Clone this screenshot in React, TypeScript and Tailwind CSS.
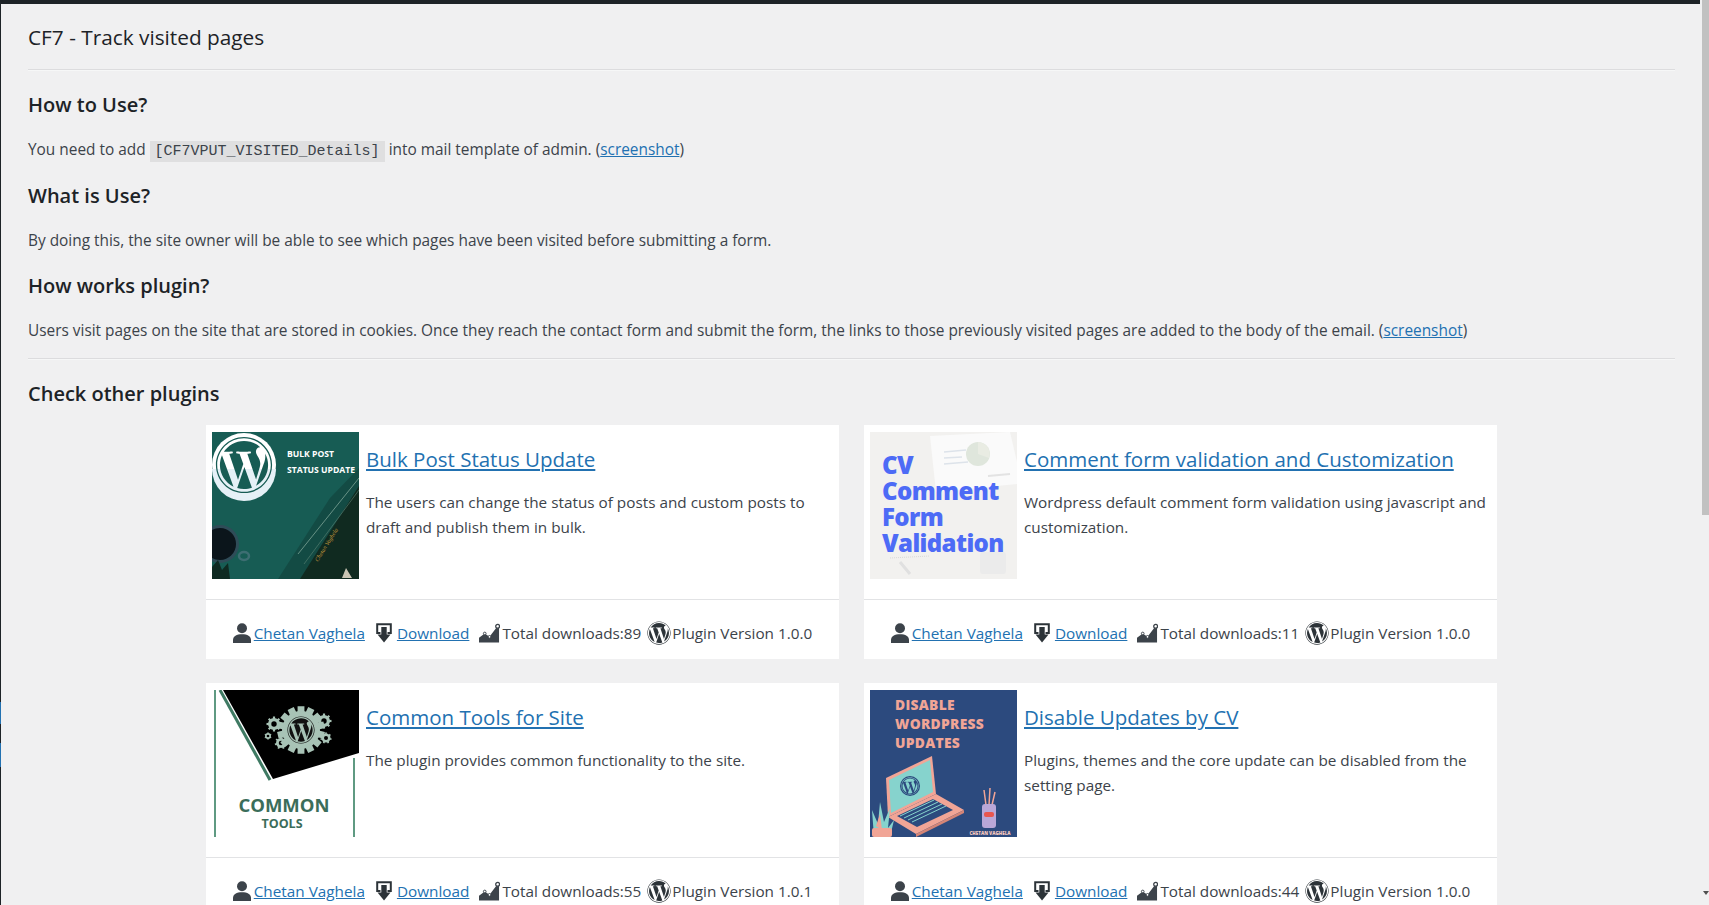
import React from "react";
import { FaWordpress } from "react-icons/fa";

type Plugin = {
  title: string;
  desc: string;
  downloads: number;
  version: string;
  Art: () => React.ReactElement;
};

function BulkArt() {
  return (
    <svg viewBox="0 0 147 147" className="w-full h-full">
      <rect width="147" height="147" fill="#175c54" />
      <path d="M66 147 L118 66 L147 36 L147 147 Z" fill="#134b44" />
      <path d="M88 147 L147 54 L147 147 Z" fill="#102a20" />
      <path d="M86 122 L147 46" stroke="#7ea597" strokeWidth="0.8" />
      <path d="M92 132 L147 58" stroke="#5e8576" strokeWidth="0.6" />
      <text x="106" y="130" fontSize="6" fill="#c99a3c" fontStyle="italic" transform="rotate(-58 106 130)" fontFamily="'Liberation Serif', serif">
        Chetan Vaghela
      </text>
      <path d="M134 136 L140 146 L130 146 Z" fill="#c9c4b3" />
      <circle cx="8" cy="112" r="19" fill="#2f4c58" />
      <circle cx="8" cy="112" r="16" fill="#0b151b" />
      <ellipse cx="32" cy="124" rx="5" ry="4" fill="none" stroke="#3d6e72" strokeWidth="2.5" />
      <path d="M0 135 L6 128 L10 138 L16 131 L18 147 L0 147 Z" fill="#0f2a22" />
      <circle cx="32" cy="33" r="32" fill="#ffffff" />
      <path d="M0 37 A32 32 0 0 0 64 37 Z" fill="#e6f1f7" />
      <FaWordpress x={3} y={4} size={58} color="#175c54" />
      <text x="75" y="25" fontSize="8.6" fontWeight="700" fill="#ffffff" fontFamily="'Open Sans', sans-serif">
        BULK POST
      </text>
      <text x="75" y="41" fontSize="8.6" fontWeight="700" fill="#ffffff" fontFamily="'Open Sans', sans-serif">
        STATUS UPDATE
      </text>
    </svg>
  );
}

function CvArt() {
  return (
    <div className="relative w-full h-full">
      <svg viewBox="0 0 147 147" className="absolute inset-0 w-full h-full">
        <rect width="147" height="147" fill="#f2f1ef" />
        <path d="M60 4 L140 0 L147 30 L147 52 L66 60 Z" fill="#fafafa" />
        <circle cx="108" cy="22" r="12" fill="#dfe6dc" />
        <path d="M108 22 L108 10 A12 12 0 0 1 119 26 Z" fill="#e9ece3" />
        <path d="M74 20 L96 18 M74 26 L92 25 M74 32 L98 30" stroke="#dde3ea" strokeWidth="1.5" />
        <path d="M118 44 L140 42" stroke="#e3e3e3" strokeWidth="2" />
        <path d="M20 126 L60 124" stroke="#d9d9d9" strokeWidth="1" strokeDasharray="1 1" />
        <path d="M30 130 L40 142" stroke="#e0e0e0" strokeWidth="3" />
        <rect x="110" y="120" width="26" height="22" rx="3" fill="#ebebeb" />
      </svg>
      <p className="relative pl-[12px] pt-[20px] text-[24px] leading-[26px] font-extrabold tracking-[-0.6px] text-[#4d6bf6]">
        CV
        <br />
        Comment
        <br />
        Form
        <br />
        Validation
      </p>
    </div>
  );
}

function Gear({ cx, cy, r, teeth }: { cx: number; cy: number; r: number; teeth: number }) {
  const items = [];
  for (let i = 0; i < teeth; i++) {
    items.push(
      <rect
        key={i}
        x={cx - r * 0.18}
        y={cy - r - r * 0.25}
        width={r * 0.36}
        height={r * 0.5}
        transform={`rotate(${(360 / teeth) * i} ${cx} ${cy})`}
      />
    );
  }
  return (
    <g fill="#a8c3b6">
      {items}
      <circle cx={cx} cy={cy} r={r} />
      <circle cx={cx} cy={cy} r={r * 0.45} fill="#000" />
    </g>
  );
}

function CommonArt() {
  return (
    <svg viewBox="0 0 147 147" className="w-full h-full">
      <rect width="147" height="147" fill="#ffffff" />
      <path d="M11 0 L147 0 L147 63 L61 89 Z" fill="#000000" />
      <path d="M8 0 L58 90" stroke="#3f7a63" strokeWidth="3" />
      <rect x="2" y="0" width="2" height="147" fill="#5f9a82" />
      <rect x="141" y="68" width="2" height="79" fill="#5f9a82" />
      <Gear cx={62} cy={34} r={6} teeth={8} />
      <Gear cx={69} cy={53} r={5} teeth={7} />
      <Gear cx={112} cy={31} r={6} teeth={8} />
      <Gear cx={114} cy={48} r={4.5} teeth={7} />
      <Gear cx={56} cy={46} r={3} teeth={6} />
      <Gear cx={89} cy={40} r={19} teeth={14} />
      <circle cx="89" cy="40" r="16" fill="#a8c3b6" />
      <FaWordpress x={75} y={26} size={28} color="#111" />
      <text x="72" y="122" textAnchor="middle" fontSize="18.5" fontWeight="700" fill="#3b6d5a" fontFamily="'Open Sans', sans-serif">
        COMMON
      </text>
      <text x="70" y="138" textAnchor="middle" fontSize="12.5" fontWeight="700" fill="#3b6d5a" fontFamily="'Open Sans', sans-serif">
        TOOLS
      </text>
    </svg>
  );
}

function DisableArt() {
  return (
    <svg viewBox="0 0 147 147" className="w-full h-full">
      <rect width="147" height="147" fill="#2c4a7e" />
      <g fill="#f1a596" fontFamily="'Open Sans', sans-serif" fontWeight="800" fontSize="13.8" letterSpacing="0.3">
        <text x="25" y="20">DISABLE</text>
        <text x="25" y="39">WORDPRESS</text>
        <text x="25" y="58">UPDATES</text>
      </g>
      <path d="M16 88 L62 66 L66 104 L18 127 Z" fill="#f1a596" />
      <path d="M19 90 L60 70 L63 102 L21 123 Z" fill="#86d3cd" />
      <circle cx="40" cy="96" r="10" fill="#2c4a7e" />
      <FaWordpress x={31} y={87} size={18} color="#86d3cd" />
      <path d="M18 127 L66 104 L94 120 L46 144 Z" fill="#f1a596" />
      <path d="M27 126 L63 109 L83 120 L47 137 Z" fill="#2c4a7e" />
      <path d="M30 126 L64 110 M34 128 L68 112 M38 130 L72 114 M42 132 L76 116" stroke="#86d3cd" strokeWidth="1" />
      <path d="M46 144 L94 120 L94 123 L46 147 Z" fill="#d48577" />
      <path d="M4 147 L2 120 L8 134 L10 112 L14 132 L20 118 L18 138 L24 130 L20 147 Z" fill="#86d3cd" />
      <path d="M6 136 L10 124 L12 140 Z" fill="#f1a596" />
      <rect x="2" y="138" width="20" height="9" rx="2" fill="#f1a596" />
      <path d="M116 115 L114 100 M119 115 L120 98 M122 115 L125 102" stroke="#f1a596" strokeWidth="1.5" />
      <rect x="112" y="114" width="14" height="24" rx="3" fill="#b9a7d8" />
      <rect x="114" y="122" width="10" height="5" rx="2" fill="#e8564f" />
      <text x="120" y="145" textAnchor="middle" fontSize="4.5" fontWeight="800" fill="#f6c7bd" fontFamily="'Open Sans', sans-serif">
        CHETAN VAGHELA
      </text>
    </svg>
  );
}

function UserIcon() {
  return (
    <svg viewBox="0 0 18 20" className="w-[18px] h-[20px]">
      <circle cx="9" cy="5.2" r="5" fill="#3c434a" />
      <path d="M0 20 V17 C0 13 3.6 11.2 9 11.2 S18 13 18 17 V20 Z" fill="#3c434a" />
    </svg>
  );
}

function DownloadIcon() {
  return (
    <svg viewBox="0 0 16 20" className="w-[16px] h-[20px]">
      <path d="M4.5 10 H1.2 V1.2 H14.8 V10 H11.5" fill="none" stroke="#2c3338" strokeWidth="2" />
      <rect x="5.3" y="4" width="5.4" height="8" fill="#2c3338" />
      <path d="M1.5 11.5 H14.5 L8 19.5 Z" fill="#2c3338" />
    </svg>
  );
}

function ChartIcon() {
  return (
    <svg viewBox="0 0 22 20" className="w-[21px] h-[20px]">
      <path d="M0 20 V15 L6 10.5 L11 14 L19 3.5 L21 3.5 V20 Z" fill="#3c434a" />
      <circle cx="6" cy="10.5" r="1.4" fill="#fff" stroke="#3c434a" strokeWidth="1" />
      <circle cx="11" cy="14" r="1.4" fill="#fff" stroke="#3c434a" strokeWidth="1" />
      <circle cx="19.5" cy="3" r="2" fill="#fff" stroke="#3c434a" strokeWidth="1.3" />
    </svg>
  );
}

function PluginCard({ p }: { p: Plugin }) {
  const Art = p.Art;
  return (
    <div className="h-[234px] bg-white flex flex-col">
      <div className="h-[174px] flex gap-[7px] pt-[7px] pl-[6px] pr-[4px]">
        <div className="w-[147px] h-[147px] shrink-0">
          <Art />
        </div>
        <div className="pt-[13px] min-w-0">
          <a href="#" className="block text-[20.5px] leading-[28px] text-[#2271b1] underline whitespace-nowrap">
            {p.title}
          </a>
          <p className="mt-[17px] text-[15.3px] leading-[25px] text-[#3c434a]">{p.desc}</p>
        </div>
      </div>
      <div className="h-px bg-[#e2e3e5]" />
      <div className="flex-1 flex items-center justify-center pt-[7px] text-[15.3px] text-[#3c434a]">
        <UserIcon />
        <a href="#" className="ml-[3px] text-[#2271b1] underline">
          Chetan Vaghela
        </a>
        <span className="ml-[11px]">
          <DownloadIcon />
        </span>
        <a href="#" className="ml-[5px] text-[#2271b1] underline">
          Download
        </a>
        <span className="ml-[10px]">
          <ChartIcon />
        </span>
        <span className="ml-[2px]">Total downloads:{p.downloads}</span>
        <FaWordpress className="ml-[6px] w-[24px] h-[24px] text-[#2c3338]" />
        <span className="ml-[1px]">Plugin Version {p.version}</span>
      </div>
    </div>
  );
}

const plugins: Plugin[] = [
  {
    title: "Bulk Post Status Update",
    desc: "The users can change the status of posts and custom posts to draft and publish them in bulk.",
    downloads: 89,
    version: "1.0.0",
    Art: BulkArt,
  },
  {
    title: "Comment form validation and Customization",
    desc: "Wordpress default comment form validation using javascript and customization.",
    downloads: 11,
    version: "1.0.0",
    Art: CvArt,
  },
  {
    title: "Common Tools for Site",
    desc: "The plugin provides common functionality to the site.",
    downloads: 55,
    version: "1.0.1",
    Art: CommonArt,
  },
  {
    title: "Disable Updates by CV",
    desc: "Plugins, themes and the core update can be disabled from the setting page.",
    downloads: 44,
    version: "1.0.0",
    Art: DisableArt,
  },
];

function Rule() {
  return <div className="h-[2px] border-t border-[#dcdcde] border-b border-b-[#f6f7f7]" />;
}

export default function App() {
  return (
    <div className="w-[1709px] h-[905px] overflow-hidden flex bg-[#f0f0f1] font-['Open_Sans',sans-serif]">
      <div className="flex-1 flex flex-col min-w-0">
        <div className="h-[4px] bg-[#1d2327]" />
        <div className="flex flex-1 min-h-0">
          {/* left edge of the admin menu */}
          <div className="w-px flex flex-col">
            <div className="h-[698px] bg-[#1d2327]" />
            <div className="h-[22px] bg-[#2271b1]" />
            <div className="h-[19px] bg-[#1d2327]" />
            <div className="h-[24px] bg-[#2271b1]" />
            <div className="flex-1 bg-[#1d2327]" />
          </div>

          <main className="flex-1 pl-[27px] pr-[25px] min-w-0">
            <h1 className="mt-[17px] text-[20.8px] leading-[32px] text-[#1d2327]">CF7 - Track visited pages</h1>
            <div className="mt-[16px]">
              <Rule />
            </div>

            <h2 className="mt-[20px] text-[20px] leading-[28px] font-semibold text-[#1d2327]">How to Use?</h2>
            <p className="mt-[19px] text-[15.4px] leading-[24px] text-[#3c434a]">
              You need to add{" "}
              <code className="inline-block h-[21px] leading-[21px] px-[5px] bg-[#dfdfe0] font-['Liberation_Mono',monospace] text-[15px] text-[#3c434a]">
                [CF7VPUT_VISITED_Details]
              </code>{" "}
              into mail template of admin. (
              <a href="#" className="text-[#2271b1] underline">
                screenshot
              </a>
              )
            </p>

            <h2 className="mt-[20px] text-[20px] leading-[28px] font-semibold text-[#1d2327]">What is Use?</h2>
            <p className="mt-[19px] text-[15.4px] leading-[24px] text-[#3c434a]">
              By doing this, the site owner will be able to see which pages have been visited before submitting a form.
            </p>

            <h2 className="mt-[19px] text-[20px] leading-[28px] font-semibold text-[#1d2327]">How works plugin?</h2>
            <p className="mt-[19px] text-[15.4px] leading-[24px] text-[#3c434a]">
              Users visit pages on the site that are stored in cookies. Once they reach the contact form and submit the
              form, the links to those previously visited pages are added to the body of the email. (
              <a href="#" className="text-[#2271b1] underline">
                screenshot
              </a>
              )
            </p>
            <div className="mt-[15px]">
              <Rule />
            </div>

            <h2 className="mt-[20px] text-[20px] leading-[28px] font-semibold text-[#1d2327]">Check other plugins</h2>
            <div className="mt-[17px] grid grid-cols-[633px_633px] justify-center gap-x-[25px] gap-y-[24px]">
              {plugins.map((p) => (
                <PluginCard key={p.title} p={p} />
              ))}
            </div>
          </main>
        </div>
      </div>

      {/* browser scrollbar */}
      <div className="w-[9px] flex flex-col items-end">
        <div className="w-[7px] h-[515px] bg-[#c1c1c1]" />
        <div className="flex-1" />
        <div className="mb-[10px] w-0 h-0 border-l-[3px] border-r-[3px] border-t-[4px] border-l-transparent border-r-transparent border-t-[#505050]" />
      </div>
    </div>
  );
}
